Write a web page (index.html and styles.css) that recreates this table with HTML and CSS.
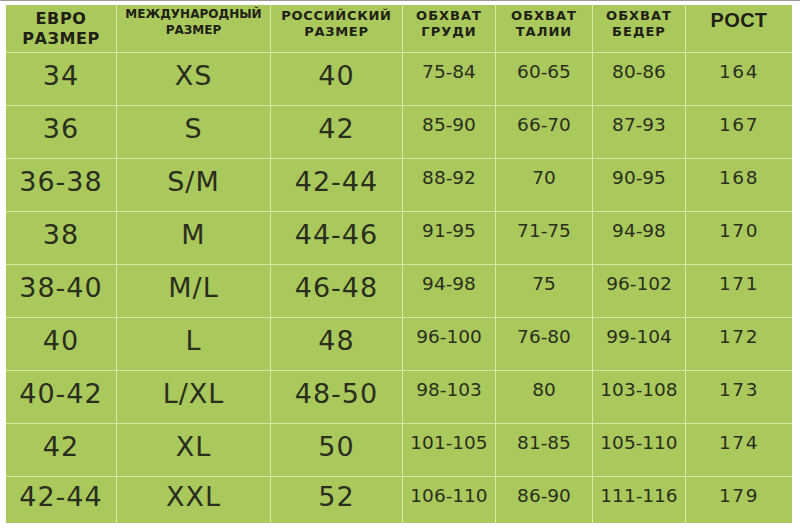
FILE: index.html
```html
<!DOCTYPE html>
<html lang="ru">
<head>
<meta charset="utf-8">
<title>Таблица размеров</title>
<link rel="stylesheet" href="styles.css">
</head>
<body>
<div class="page">
  <div class="chart">
    <div class="h h1">ЕВРО<br>РАЗМЕР</div>
    <div class="h h2">МЕЖДУНАРОДНЫЙ<br>РАЗМЕР</div>
    <div class="h h3">РОССИЙСКИЙ<br>РАЗМЕР</div>
    <div class="h hm">ОБХВАТ<br>ГРУДИ</div>
    <div class="h hm">ОБХВАТ<br>ТАЛИИ</div>
    <div class="h hm">ОБХВАТ<br>БЕДЕР</div>
    <div class="h hr">РОСТ</div>

    <div class="c big">34</div><div class="c big">XS</div><div class="c big">40</div><div class="c m">75-84</div><div class="c m">60-65</div><div class="c m">80-86</div><div class="c m r">164</div>
    <div class="c big">36</div><div class="c big">S</div><div class="c big">42</div><div class="c m">85-90</div><div class="c m">66-70</div><div class="c m">87-93</div><div class="c m r">167</div>
    <div class="c big">36-38</div><div class="c big">S/M</div><div class="c big">42-44</div><div class="c m">88-92</div><div class="c m">70</div><div class="c m">90-95</div><div class="c m r">168</div>
    <div class="c big">38</div><div class="c big">M</div><div class="c big">44-46</div><div class="c m">91-95</div><div class="c m">71-75</div><div class="c m">94-98</div><div class="c m r">170</div>
    <div class="c big">38-40</div><div class="c big">M/L</div><div class="c big">46-48</div><div class="c m">94-98</div><div class="c m">75</div><div class="c m">96-102</div><div class="c m r">171</div>
    <div class="c big">40</div><div class="c big">L</div><div class="c big">48</div><div class="c m">96-100</div><div class="c m">76-80</div><div class="c m">99-104</div><div class="c m r">172</div>
    <div class="c big">40-42</div><div class="c big">L/XL</div><div class="c big">48-50</div><div class="c m">98-103</div><div class="c m">80</div><div class="c m">103-108</div><div class="c m r">173</div>
    <div class="c big">42</div><div class="c big">XL</div><div class="c big">50</div><div class="c m">101-105</div><div class="c m">81-85</div><div class="c m">105-110</div><div class="c m r">174</div>
    <div class="c big">42-44</div><div class="c big">XXL</div><div class="c big">52</div><div class="c m">106-110</div><div class="c m">86-90</div><div class="c m">111-116</div><div class="c m r">179</div>
  </div>
</div>
</body>
</html>
```

FILE: styles.css
```css
html, body {
  margin: 0;
  padding: 0;
  background: #ffffff;
}

.page {
  width: 800px;
  height: 531px;
  box-sizing: border-box;
  border-top: 1px solid #9a9a9a;
  padding: 4px 8px 0 6px;
}

.chart {
  display: grid;
  grid-template-columns: 110px 153px 131px 92px 96px 92px 106px;
  grid-template-rows: 47px repeat(8, 52px) 46px;
  gap: 1px;
  background: #d8e8a6;
  width: 786px;
  font-family: "DejaVu Sans", Verdana, sans-serif;
}

.h, .c {
  background: #aac95c;
  display: flex;
  justify-content: center;
  text-align: center;
}

.h {
  font-weight: bold;
  color: #1f2116;
}

.h1 {
  align-items: center;
  font-size: 16px;
  line-height: 20px;
  letter-spacing: 0.6px;
}

.h2 {
  align-items: flex-start;
  font-size: 12px;
  line-height: 16px;
  padding-top: 1px;
}

.h3 {
  align-items: flex-start;
  font-size: 13px;
  line-height: 16px;
  padding-top: 3px;
  letter-spacing: 0.7px;
}

.hm {
  align-items: flex-start;
  font-size: 13px;
  line-height: 16px;
  padding-top: 3px;
  letter-spacing: 1px;
}

.hr {
  align-items: flex-start;
  font-family: "Liberation Sans", Arial, sans-serif;
  font-size: 20px;
  line-height: 22px;
  padding-top: 4px;
  letter-spacing: 0.5px;
}

.c {
  color: #2a2e1d;
}

.big {
  align-items: center;
  font-size: 27px;
  line-height: 30px;
  padding-bottom: 6px;
  letter-spacing: 1px;
}

.m {
  align-items: flex-start;
  font-size: 18.5px;
  line-height: 22px;
  padding-top: 8px;
}

.r {
  letter-spacing: 1.5px;
}
```
